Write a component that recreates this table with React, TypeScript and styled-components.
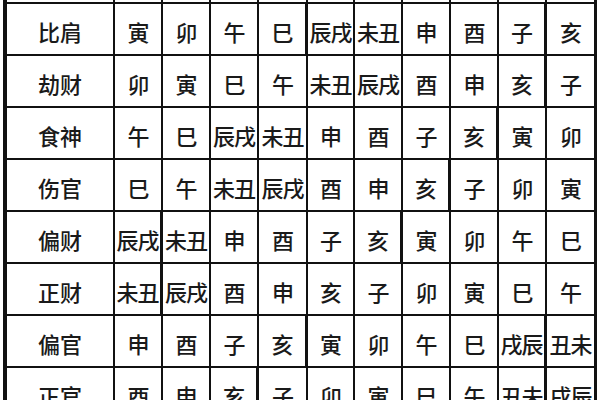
import React from "react";
import styled, { createGlobalStyle } from "styled-components";

const Global = createGlobalStyle`
  html, body {
    margin: 0;
    padding: 0;
    background: #ffffff;
  }
  body {
    width: 600px;
    height: 400px;
    overflow: hidden;
    font-family: "Noto Sans CJK SC", "Noto Sans", sans-serif;
  }
`;

const Viewport = styled.div`
  width: 600px;
  height: 400px;
  overflow: hidden;
  background: #ffffff;
  padding-left: 3px;
  box-sizing: border-box;
`;

const Grid = styled.div`
  display: grid;
  grid-template-columns: 108px 48px 48px 48px 49px 47px 48px 48px 48px 48px 50px;
  grid-auto-rows: 52px;
  grid-template-rows: 4px;
  border-left: 4px solid #111111;
  width: max-content;
`;

const StubCell = styled.div<{ $last?: boolean }>`
  box-sizing: border-box;
  height: 4px;
  border-right: ${(p) => (p.$last ? "3px" : "2px")} solid #111111;
  border-bottom: 2px solid #111111;
`;

const Cell = styled.div<{ $heavy?: boolean; $last?: boolean; $label?: boolean }>`
  box-sizing: border-box;
  height: 52px;
  border-right: ${(p) => (p.$last ? "3px" : p.$heavy ? "3px" : "2px")} solid #111111;
  border-bottom: 2px solid #111111;
  display: flex;
  align-items: center;
  justify-content: center;
  padding-top: 3px;
  font-family: "Noto Sans CJK SC", sans-serif;
  font-size: 22px;
  font-weight: 500;
  color: #1a1a1a;
  white-space: nowrap;
  overflow: visible;
  letter-spacing: ${(p) => (p.$label ? "0px" : "-1px")};
`;

type Row = { label: string; cells: string[]; heavy: number[] };

const rows: Row[] = [
  { label: "比肩", cells: ["寅", "卯", "午", "巳", "辰戌", "未丑", "申", "酉", "子", "亥"], heavy: [4, 9] },
  { label: "劫财", cells: ["卯", "寅", "巳", "午", "未丑", "辰戌", "酉", "申", "亥", "子"], heavy: [9] },
  { label: "食神", cells: ["午", "巳", "辰戌", "未丑", "申", "酉", "子", "亥", "寅", "卯"], heavy: [8] },
  { label: "伤官", cells: ["巳", "午", "未丑", "辰戌", "酉", "申", "亥", "子", "卯", "寅"], heavy: [7] },
  { label: "偏财", cells: ["辰戌", "未丑", "申", "酉", "子", "亥", "寅", "卯", "午", "巳"], heavy: [1, 6] },
  { label: "正财", cells: ["未丑", "辰戌", "酉", "申", "亥", "子", "卯", "寅", "巳", "午"], heavy: [1] },
  { label: "偏官", cells: ["申", "酉", "子", "亥", "寅", "卯", "午", "巳", "戌辰", "丑未"], heavy: [4, 9] },
  { label: "正官", cells: ["酉", "申", "亥", "子", "卯", "寅", "巳", "午", "丑未", "戌辰"], heavy: [3, 9] },
];

export default function App() {
  return (
    <>
      <Global />
      <Viewport>
        <Grid>
          {Array.from({ length: 11 }).map((_, i) => (
            <StubCell key={`s${i}`} $last={i === 10} />
          ))}
          {rows.map((r, ri) => (
            <React.Fragment key={ri}>
              <Cell $label>{r.label}</Cell>
              {r.cells.map((c, ci) => (
                <Cell key={ci} $heavy={r.heavy.includes(ci + 1)} $last={ci === 9}>
                  {c}
                </Cell>
              ))}
            </React.Fragment>
          ))}
        </Grid>
      </Viewport>
    </>
  );
}
